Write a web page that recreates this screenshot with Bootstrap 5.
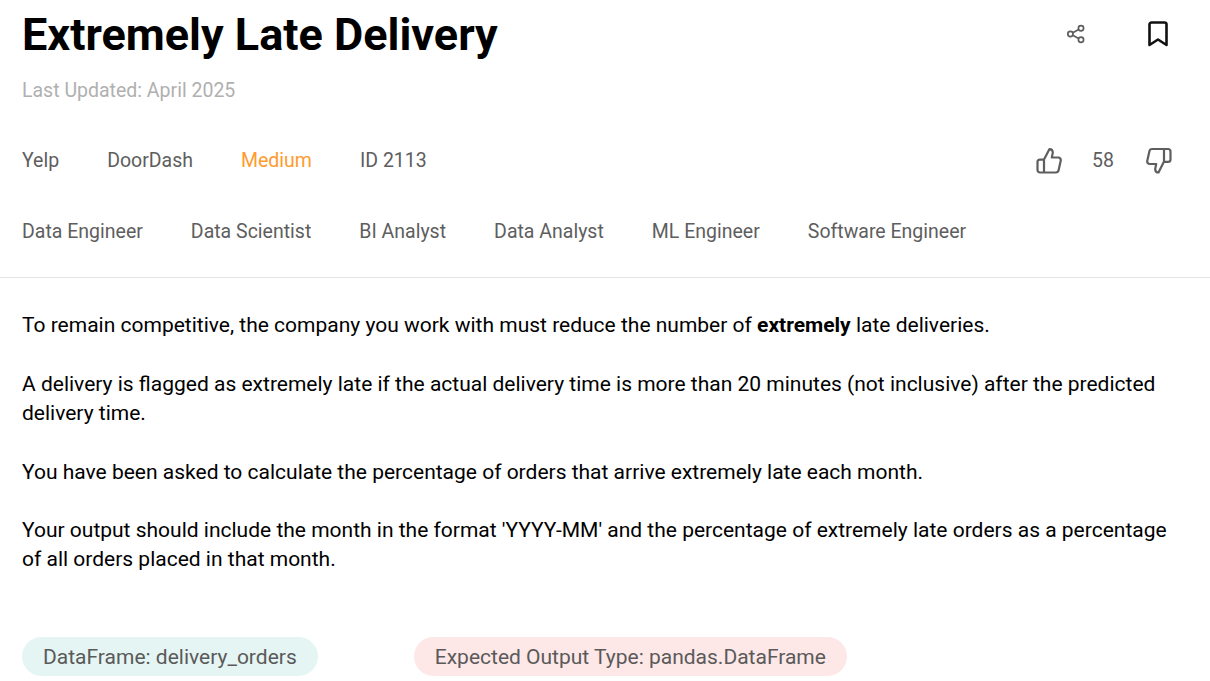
<!DOCTYPE html>
<html lang="en">
<head>
  <meta charset="UTF-8">
  <title>Extremely Late Delivery</title>
  <meta name="viewport" content="width=device-width, initial-scale=1">
  <link href="https://cdn.jsdelivr.net/npm/bootstrap@5.3.3/dist/css/bootstrap.min.css" rel="stylesheet">
  <style>
    html, body {
      height: 681px;
      overflow: hidden;
    }
    body {
      font-family: Roboto, sans-serif;
      color: #000;
      background: #fff;
    }
    .page-head {
      padding: 10px 22px 0;
    }
    .q-title {
      font-size: 45px;
      font-weight: 700;
      line-height: 50px;
      margin: 0;
      color: #000;
    }
    .q-updated {
      font-size: 19.5px;
      line-height: 28px;
      color: #b0b0b0;
      margin-top: 17px;
    }
    .meta-row {
      font-size: 19.5px;
      line-height: 28px;
      color: #5e5e5e;
      gap: 48px;
    }
    .meta-one { margin-top: 42px; }
    .meta-two { margin-top: 43px; padding-bottom: 31px; }
    .level-med { color: #ff9a2e; }
    .head-rule {
      border-top: 1px solid #e4e4e4;
    }
    .q-body {
      padding: 33.45px 22px 0;
      font-size: 21px;
      line-height: 29.25px;
    }
    .q-body p {
      margin: 0 0 29.25px;
    }
    .pill-row {
      padding: 0 22px;
      margin-top: 62.55px;
      gap: 96px;
    }
    .info-pill {
      font-size: 21px;
      line-height: 40px;
      height: 39px;
      padding: 0 21px;
      border-radius: 20px;
      color: #5a5a5a;
    }
    .pill-teal { background: #e5f5f3; }
    .pill-red { background: #fde8e7; }
    .head-icons { margin-top: -3px; }
    .head-icons svg, .vote-box svg { display: block; }
    .share-icon { margin-right: 60px; }
    .bm-icon { margin-right: 18px; }
    .vote-box { margin-right: 16px; }
    .vote-count { width: 84px; padding-right: 2px; text-align: center; }
  </style>
</head>
<body>
  <div class="page-head">
    <div class="d-flex justify-content-between align-items-center">
      <h1 class="q-title">Extremely Late Delivery</h1>
      <div class="head-icons d-flex align-items-center">
        <svg class="share-icon" width="20" height="20" viewBox="0 0 20 20" fill="none" stroke="#5e5e5e" stroke-width="1.7">
          <circle cx="15" cy="4.2" r="2.6"/>
          <circle cx="4.4" cy="10" r="2.6"/>
          <circle cx="15" cy="15.8" r="2.6"/>
          <path d="M6.7 8.700 12.700 5.500M6.700 11.300 12.700 14.500"/>
        </svg>
        <svg class="bm-icon" width="24" height="28" viewBox="0 0 24 28" fill="none" stroke="#111" stroke-width="2.6" stroke-linejoin="round">
          <path d="M3.500 25V4.500a2 2 0 0 1 2-2h13a2 2 0 0 1 2 2V25L12 19.500Z"/>
        </svg>
      </div>
    </div>
    <div class="q-updated">Last Updated: April 2025</div>
    <div class="meta-row meta-one d-flex align-items-center">
      <span>Yelp</span>
      <span>DoorDash</span>
      <span class="level-med">Medium</span>
      <span>ID 2113</span>
      <div class="vote-box d-flex align-items-center ms-auto">
        <svg width="26" height="28" viewBox="0 0 26 28" fill="none" stroke="#5e5e5e" stroke-width="2.2" stroke-linejoin="round" stroke-linecap="round">
          <path d="M8 25.500V12.500L13.500 2c2.200 0 3.300 1.600 3.300 3.600L15.800 10.500h6.400c1.800 0 2.900 1.500 2.500 3.200l-2.100 9.600c-.3 1.300-1.300 2.200-2.700 2.200H4c-1.400 0-2.500-1-2.500-2.400v-8c0-1.300 1.100-2.400 2.500-2.400h4"/>
        </svg>
        <span class="vote-count">58</span>
        <svg width="26" height="28" viewBox="0 0 26 28" fill="none" stroke="#5e5e5e" stroke-width="2.2" stroke-linejoin="round" stroke-linecap="round">
          <path d="M18 2v12.500L12.500 25.500c-2.200 0-3.300-1.600-3.300-3.600l1-4.900H3.800c-1.800 0-2.900-1.500-2.500-3.200l2.100-9.600C3.700 2.900 4.700 2 6.100 2H22c1.400 0 2.500 1 2.500 2.400v8c0 1.300-1.100 2.400-2.500 2.400h-4"/>
        </svg>
      </div>
    </div>
    <div class="meta-row meta-two d-flex">
      <span>Data Engineer</span>
      <span>Data Scientist</span>
      <span>BI Analyst</span>
      <span>Data Analyst</span>
      <span>ML Engineer</span>
      <span>Software Engineer</span>
    </div>
  </div>
  <div class="head-rule"></div>
  <div class="q-body">
    <p>To remain competitive, the company you work with must reduce the number of <b>extremely</b> late deliveries.</p>
    <p>A delivery is flagged as extremely late if the actual delivery time is more than 20 minutes (not inclusive) after the predicted delivery time.</p>
    <p>You have been asked to calculate the percentage of orders that arrive extremely late each month.</p>
    <p>Your output should include the month in the format 'YYYY-MM' and the percentage of extremely late orders as a percentage of all orders placed in that month.</p>
  </div>
  <div class="pill-row d-flex">
    <span class="info-pill pill-teal">DataFrame: delivery_orders</span>
    <span class="info-pill pill-red">Expected Output Type: pandas.DataFrame</span>
  </div>
  <script src="https://cdn.jsdelivr.net/npm/bootstrap@5.3.3/dist/js/bootstrap.bundle.min.js"></script>
</body>
</html>
